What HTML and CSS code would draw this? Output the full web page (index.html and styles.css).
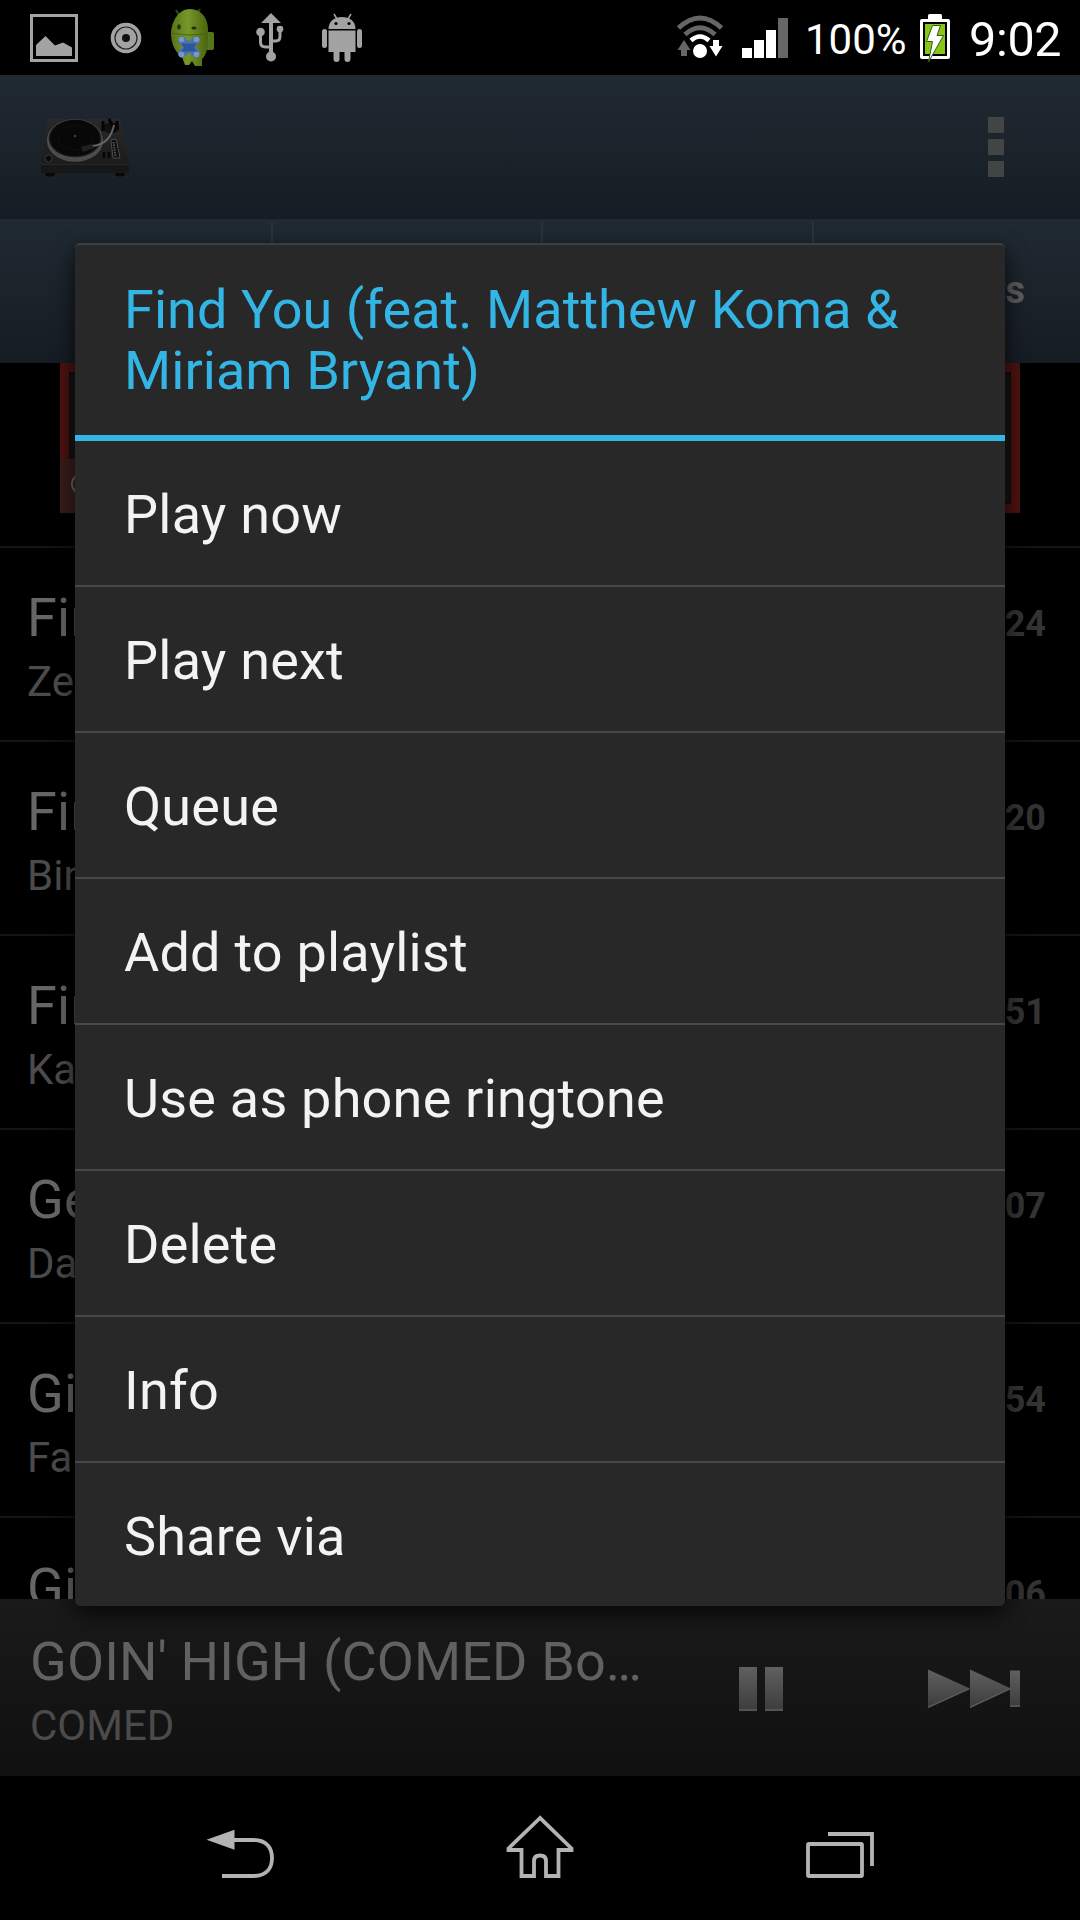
FILE: index.html
```html
<!DOCTYPE html>
<html lang="en">
<head>
<meta charset="utf-8">
<title>Music player</title>
<link rel="stylesheet" href="styles.css">
</head>
<body>
<div class="screen">
  <header class="status">
    <div class="status-left">
      <svg width="90" height="75" viewBox="0 0 90 75"><rect x="31.5" y="15.5" width="45" height="45" fill="none" stroke="#a3a3a3" stroke-width="3"/><path d="M36 56V45l9.500-9 9.500 9.500 8-3 9 5V56z" fill="#a3a3a3"/></svg>
      <svg width="60" height="75" viewBox="90 0 60 75"><circle cx="126" cy="38" r="15.300" fill="#a3a3a3"/><circle cx="126" cy="38" r="11" fill="none" stroke="#222" stroke-width="1.200"/><circle cx="126" cy="38" r="4" fill="#111"/></svg>
      <svg width="80" height="75" viewBox="150 0 80 75">
        <defs><linearGradient id="green"><stop offset="0" stop-color="#567316"/><stop offset=".45" stop-color="#77972a"/><stop offset="1" stop-color="#48640f"/></linearGradient></defs>
        <rect x="205" y="32" width="9" height="18" rx="2" fill="#55751a"/>
        <path d="M176 10l3 5M200 9l-3 5" stroke="#34480f" stroke-width="2"/>
        <path d="M171 33C172 20 179 9 190 9s18 9 18 20v12c0 9-3 16-6 18v7h-7l-3-5-3 4h-4l-3-8c-8-6-11-15-11-24z" fill="url(#green)"/>
        <path d="M172 33q17 4 36 0" fill="none" stroke="#4b6413" stroke-width="1"/>
        <ellipse cx="179" cy="27" rx="1.800" ry="2.800" fill="#25300c"/><ellipse cx="194" cy="28" rx="2.600" ry="1.500" fill="#25300c"/>
        <path d="M182 40.500l14 13M196 40.500l-14 13" stroke="#4a72b2" stroke-width="8" stroke-linecap="round"/>
        <path d="M181 43.500h16l-3 4 3 4h-16l3-4z" fill="#2f569c"/>
        <g fill="#7d98ba"><circle cx="181.500" cy="39.500" r="2.800"/><circle cx="196.500" cy="39.500" r="2.800"/><circle cx="181.500" cy="54.500" r="2.800"/><circle cx="196.500" cy="54.500" r="2.800"/></g>
      </svg>
      <svg width="80" height="75" viewBox="230 0 80 75"><g fill="#a3a3a3"><path d="M271 13l10 10h-8v32h-4V23h-8z"/><circle cx="271" cy="56.500" r="5"/><circle cx="260.500" cy="32" r="4.300"/><circle cx="280" cy="29" r="3.300"/></g><path d="M260.500 33v9q0 5 5 5h6M280 29v7q0 5-4 5h-5" fill="none" stroke="#a3a3a3" stroke-width="3"/></svg>
      <svg width="70" height="75" viewBox="310 0 70 75"><g fill="#a3a3a3"><path d="M328.500 29c0-8 6-12 13.500-12s13.500 4 13.500 12z"/><path d="M328.500 30.500h27V52h-5v7a3 3 0 0 1-6 0v-7h-5v7a3 3 0 0 1-6 0v-7h-5z"/><rect x="322" y="29" width="5" height="19" rx="2.500"/><rect x="357" y="29" width="5" height="19" rx="2.500"/></g><path d="M334 14l3 5M351 14l-3 5" stroke="#a3a3a3" stroke-width="1.500"/><circle cx="336" cy="23.500" r="1.600"/><circle cx="349" cy="23.500" r="1.600"/></svg>
    </div>
    <div class="status-right">
      <svg width="65" height="75" viewBox="670 0 65 75">
        <path d="M678.500 28Q700 8 721.500 28" fill="none" stroke="#666" stroke-width="5"/>
        <path d="M685 34.500Q700 21 715 34.500" fill="none" stroke="#666" stroke-width="5"/>
        <path d="M691 40.500Q700 32.500 709 40.500" fill="none" stroke="#fff" stroke-width="4.500"/>
        <circle cx="700" cy="51" r="7" fill="#fff"/>
        <path d="M684 40l6.500 10H687v6h-6v-6h-3.500z" fill="#666"/><path d="M713 40h6v6h3.500L716 56.500 709.500 46h3.500z" fill="#fff"/>
      </svg>
      <svg width="65" height="75" viewBox="735 0 65 75"><path d="M742 48h10v10h-10zM754 40h10v18h-10zM766 30h10v28h-10z" fill="#fff"/><path d="M778 18h10v40h-10z" fill="#666"/></svg>
      <span class="percent">100%</span>
      <svg width="40" height="75" viewBox="915 0 40 75">
        <rect x="928" y="14" width="14" height="7" rx="1.500" fill="#fff"/><rect x="920" y="19" width="30" height="40" rx="2" fill="#fff"/><rect x="923" y="22" width="24" height="34" fill="#000"/><rect x="925" y="24" width="20" height="30" fill="#85c714"/>
        <path d="M932.500 25.500h8l-3.500 10h6.500L928.500 62l4-20.500h-6z" fill="#fff" stroke="#3c5a12" stroke-width="1"/>
      </svg>
      <span class="clock">9:02</span>
    </div>
  </header>

  <div class="action-bar">
    <svg width="130" height="90" viewBox="20 100 130 90">
      <defs><linearGradient id="deck" x2="0" y2="1"><stop offset="0" stop-color="#292929"/><stop offset="1" stop-color="#1b1b1b"/></linearGradient></defs>
      <ellipse cx="50" cy="174" rx="5" ry="2.500" fill="#080808"/><ellipse cx="120" cy="174" rx="5" ry="2.500" fill="#080808"/>
      <path d="M48 119h73l8 45H41z" fill="url(#deck)"/><path d="M41 164h88v9H41z" fill="#171717"/><path d="M41 164.300h88" stroke="#2c2c2c"/>
      <ellipse cx="75" cy="141" rx="28" ry="20.800" fill="#4c4c4c"/><ellipse cx="75" cy="138.800" rx="27.500" ry="19.500" fill="#555"/><ellipse cx="75" cy="138.500" rx="26.500" ry="19" fill="#1d1d1d"/>
      <ellipse cx="75" cy="138" rx="24.800" ry="18" fill="#080808"/><ellipse cx="75" cy="138" rx="17" ry="12" fill="none" stroke="#0f0f0f"/><circle cx="75" cy="136" r="1.200" fill="#444"/>
      <ellipse cx="111" cy="128" rx="9" ry="6" fill="#111" stroke="#333" stroke-width=".6"/><path d="M103 121v10M109 119l6 12M117 121v8" stroke="#050505" stroke-width="3"/>
      <path d="M114 125c-2 10-8 20-22 21" fill="none" stroke="#686868" stroke-width="1.800"/><path d="M81 147l11-3 2 4-11 4z" fill="#202020"/>
      <path d="M111 140l5-1 4 19h-7z" fill="#0c0c0c" stroke="#4a4a4a"/><path d="M113.500 142l2 14" stroke="#555" stroke-width="2" stroke-dasharray="1.500 1"/>
      <path d="M104 152v6M109 152v6" stroke="#050505" stroke-width="2.500"/><circle cx="48.500" cy="158.500" r="3.500" fill="#0a0a0a" stroke="#444" stroke-width=".8"/>
    </svg>
    <div class="overflow"><i></i><i></i><i></i></div>
  </div>

  <nav class="tabs"><div></div><div></div><div></div><div class="tab-label">Folders</div></nav>

  <div class="banner-area"><div class="banner"><div class="banner-tag"><i></i></div></div></div>

  <main class="songs">
    <div class="song"><div><p class="name">Find</p><p class="artist">Zed</p></div><b>24</b></div>
    <div class="song"><div><p class="name">Find</p><p class="artist">Bin</p></div><b>20</b></div>
    <div class="song"><div><p class="name">Find</p><p class="artist">Kas</p></div><b>51</b></div>
    <div class="song"><div><p class="name">Get</p><p class="artist">Daf</p></div><b>07</b></div>
    <div class="song"><div><p class="name">Gi</p><p class="artist">Fa</p></div><b>54</b></div>
    <div class="song"><div><p class="name">Gi</p></div><b>06</b></div>
  </main>

  <footer class="player">
    <div class="track"><p class="name">GOIN' HIGH (COMED Bo…</p><p class="artist">COMED</p></div>
    <svg width="380" height="177" viewBox="700 1599 380 177">
      <defs><linearGradient id="metal" x2="0" y2="1"><stop offset="0" stop-color="#606060"/><stop offset="1" stop-color="#3c3c3c"/></linearGradient></defs>
      <g fill="url(#metal)"><rect x="739" y="1667" width="18" height="44"/><rect x="765" y="1667" width="18" height="44"/><path d="M928 1669.500l42 19-42 19.500z"/><path d="M970 1669.500l41 19-41 19.500z"/><rect x="1010" y="1670.500" width="10" height="36.500"/></g>
      <path d="M739 1710h18M765 1710h18M928 1707.300l41-18.500M970 1707.300l40-18.500M1010 1706h10" stroke="#5c5c5c" stroke-width="1.300"/>
    </svg>
  </footer>

  <nav class="system-nav">
    <svg width="1080" height="144" viewBox="0 1776 1080 144">
      <path d="M206.500 1839.800l28-10v20z" fill="#b3b3b3"/>
      <g fill="none" stroke="#b3b3b3" stroke-width="3.800"><path d="M233 1840h20c14 0 19 8 19 18s-5 18-19 18h-31"/>
      <path d="M540 1818l-31.500 30.500v1.500h13V1876H534v-15q0-5.500 6-5.500t6 5.500v15h12.500v-26h13v-1.500z"/>
      <rect x="808" y="1844" width="54" height="32" rx="1"/><path d="M828 1834h44v32"/></g>
    </svg>
  </nav>

  <section class="dialog">
    <h1>Find You (feat. Matthew Koma &amp; Miriam Bryant)</h1>
    <ul>
      <li>Play now</li>
      <li>Play next</li>
      <li>Queue</li>
      <li>Add to playlist</li>
      <li>Use as phone ringtone</li>
      <li>Delete</li>
      <li>Info</li>
      <li>Share via</li>
    </ul>
  </section>
</div>
</body>
</html>
```
FILE: styles.css
```css
* { box-sizing: border-box; margin: 0; padding: 0; }
body { background: #000; font-family: Roboto, "Liberation Sans", sans-serif; }
svg { display: block; flex: none; }
.screen { position: relative; display: flex; flex-direction: column; width: 1080px; height: 1920px; overflow: hidden; }

.status { display: flex; justify-content: space-between; height: 75px; color: #fff; }
.status-left, .status-right { display: flex; }
.status-right { width: 410px; }
.percent { width: 115px; padding-left: 5px; font-size: 42px; line-height: 79px; }
.clock { padding-left: 14px; font-size: 48.5px; line-height: 79px; letter-spacing: -.3px; }

.action-bar { display: flex; justify-content: space-between; height: 144px; padding: 25px 76px 0 20px; background: linear-gradient(#202a32, #161c24); }
.overflow { display: flex; flex-direction: column; gap: 6px; padding-top: 17px; }
.overflow i { width: 16px; height: 16px; background: #424546; }

.tabs { display: grid; grid-template-columns: 271px 270px 271px 268px; height: 144px; padding: 3px 0; background: linear-gradient(#202a32, #161c24); }
.tabs div + div { border-left: 2px solid #29343a; }
.tab-label { padding-right: 55px; text-align: right; font-size: 38px; font-weight: 700; line-height: 136px; color: #5c5c5c; }

.banner-area { height: 185px; padding: 0 60px; border-bottom: 2px solid #141414; }
.banner { display: flex; align-items: flex-end; height: 150px; border: 9px solid #4c120f; background: #151515; box-shadow: inset 0 0 3px #000; }
.banner-tag { width: 40px; height: 54px; margin: 0 0 -9px -9px; padding: 14px 0 0 11px; background: #391d1b; }
.banner-tag i { display: block; width: 22px; height: 22px; border: 2px solid #666; border-radius: 50%; }

.songs { height: 1051px; overflow: hidden; }
.song { display: flex; justify-content: space-between; height: 194px; padding: 38px 34px 0 27px; border-bottom: 2px solid #141414; }
.name { font-size: 54px; line-height: 64px; color: #666; letter-spacing: .2px; }
.artist { font-size: 42px; line-height: 64px; color: #4b4b4b; }
.song b { font-size: 36px; line-height: 77px; color: #333; }

.player { display: flex; height: 177px; background: linear-gradient(#1a1a1a, #101010); }
.track { width: 700px; padding: 31px 0 0 30px; }
.player .name { color: #616161; letter-spacing: .1px; }
.system-nav { height: 144px; background: #000; }

.dialog { position: absolute; left: 75px; top: 243px; width: 930px; height: 1363px; border-top: 2px solid #3e3e3e; border-radius: 5px; background: #282828; box-shadow: 0 8px 22px rgba(0, 0, 0, .75); overflow: hidden; }
.dialog h1 { height: 196px; padding: 34px 48px 0 49px; border-bottom: 6px solid #33b5e5; font-size: 54px; font-weight: 400; line-height: 61px; letter-spacing: .05px; color: #33b5e5; }
.dialog ul { list-style: none; }
.dialog li { height: 146px; padding: 5px 48px 0 49px; border-bottom: 2px solid #484848; font-size: 54px; line-height: 138px; letter-spacing: .22px; color: #f3f3f3; }
.dialog li:last-child { border-bottom: 0; }
```
